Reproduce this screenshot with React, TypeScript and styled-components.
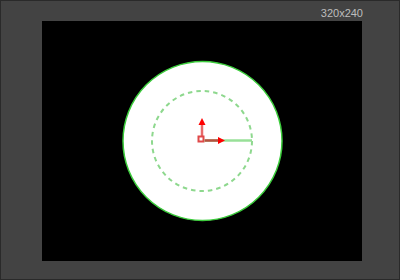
import styled, { createGlobalStyle } from 'styled-components';

const GlobalStyle = createGlobalStyle`
  html, body {
    margin: 0;
    padding: 0;
    background: #434343;
  }
`;

const Frame = styled.div`
  width: 400px;
  height: 280px;
  box-sizing: border-box;
  border: 1px solid #2a2a2a;
  background: #434343;
  display: flex;
  flex-direction: column;
  padding-left: 41px;
`;

const Header = styled.div`
  width: 320px;
  height: 20px;
  display: flex;
  justify-content: flex-end;
  align-items: flex-end;
`;

const SizeLabel = styled.span`
  font-family: 'Liberation Sans', Arial, sans-serif;
  font-size: 11px;
  line-height: 11px;
  color: #bdbdbd;
  padding-bottom: 2px;
  margin-right: -1px;
`;

const Viewport = styled.div`
  width: 320px;
  height: 240px;
  background: #000;
  svg {
    display: block;
  }
`;

const CX = 160;
const CY = 120;

function Scene() {
  return (
    <svg width="320" height="240" viewBox="0 0 320 240">
      <circle cx={CX + 0.5} cy={CY} r={79.5} fill="#fff" stroke="#3ccc3c" strokeWidth={1.5} />
      <circle
        cx={CX}
        cy={CY}
        r={50}
        fill="none"
        stroke="#8ed88e"
        strokeWidth={2}
        strokeDasharray="4.5 4"
      />
      {/* radius handle */}
      <line x1={CX} y1={CY - 0.5} x2={CX + 50} y2={CY - 0.5} stroke="#98e098" strokeWidth={2.5} />
      {/* gizmo axes */}
      <line x1={CX} y1={CY - 5} x2={CX} y2={CY - 17} stroke="#e86a6a" strokeWidth={2.5} />
      <polygon points={`${CX},${CY - 23} ${CX - 3.5},${CY - 16} ${CX + 3.5},${CY - 16}`} fill="#ff0000" />
      <line x1={CX + 3} y1={CY - 0.5} x2={CX + 17} y2={CY - 0.5} stroke="#b85040" strokeWidth={2.5} />
      <polygon points={`${CX + 23},${CY - 0.5} ${CX + 16},${CY - 4} ${CX + 16},${CY + 3}`} fill="#ff0000" />
      <rect x={CX - 3.5} y={CY - 4.5} width={5} height={5} fill="#fff" stroke="#e04848" strokeWidth={2} />
    </svg>
  );
}

export default function App() {
  return (
    <>
      <GlobalStyle />
      <Frame>
        <Header>
          <SizeLabel>320x240</SizeLabel>
        </Header>
        <Viewport>
          <Scene />
        </Viewport>
      </Frame>
    </>
  );
}
